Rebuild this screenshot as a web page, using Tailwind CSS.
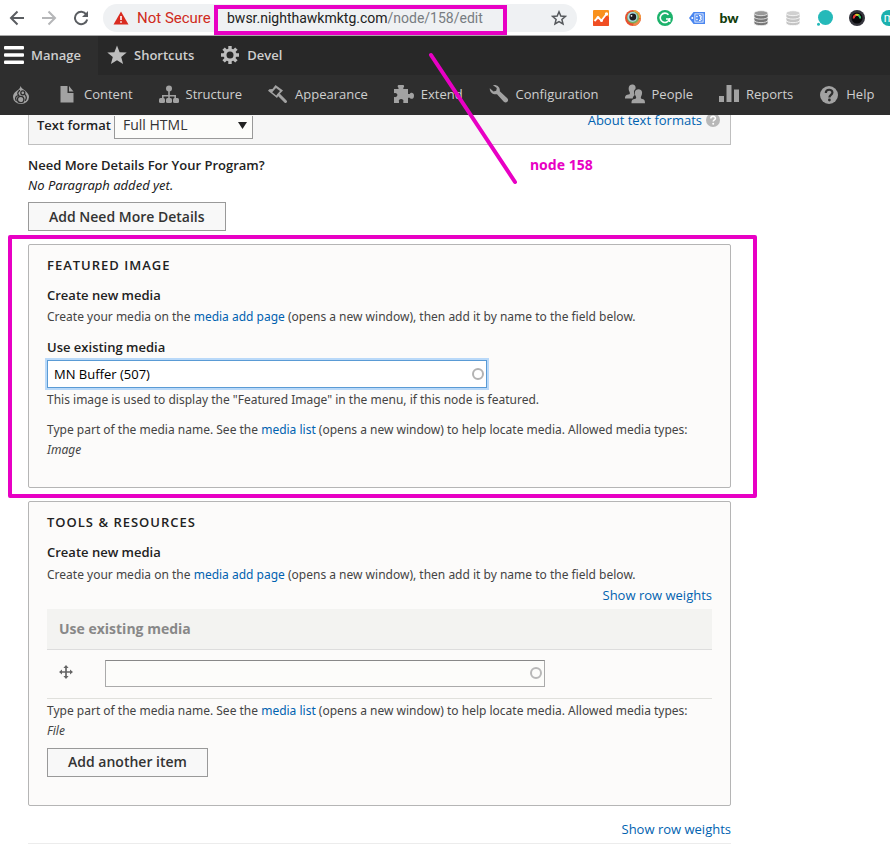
<!DOCTYPE html>
<html lang="en">

<head>
    <meta charset="UTF-8">
    <meta name="viewport" content="width=device-width, initial-scale=1.0">
    <title>Edit node</title>
    <script src="https://cdn.jsdelivr.net/npm/@tailwindcss/browser@4"></script>
</head>

<body class="relative overflow-x-hidden bg-white font-['Open_Sans',sans-serif] text-[13px] leading-5 text-[#222]">

    <!-- Browser bar -->
    <header class="relative flex h-9 items-center border-b border-[#a8a8a8] bg-white font-['Roboto',sans-serif]">
        <button aria-label="Back" class="ml-2 flex w-[18px] justify-center text-[#5a5d61]">
            <svg class="size-4" viewBox="0 0 16 16" fill="none" stroke="currentColor" stroke-width="2"><path d="M15 8H2.5M8.5 1.5L2 8l6.500 6.500"/></svg>
        </button>
        <button aria-label="Forward" class="ml-[14px] flex w-[18px] justify-center text-[#b5b6b8]">
            <svg class="size-4" viewBox="0 0 16 16" fill="none" stroke="currentColor" stroke-width="2"><path d="M1 8h12.500M7.500 1.500L14 8l-6.500 6.500"/></svg>
        </button>
        <button aria-label="Reload" class="ml-[14px] flex w-[18px] justify-center text-[#5a5d61]">
            <svg class="size-4" viewBox="0 0 16 16" fill="none" stroke="currentColor" stroke-width="2"><path d="M13.300 4.500A6.200 6.200 0 1 0 14.200 9.500"/><path d="M15 1v6H9z" fill="currentColor" stroke="none"/></svg>
        </button>
        <div class="ml-[13px] flex h-7 min-w-0 flex-1 items-center rounded-full bg-[#eff1f3] pr-[10px] pl-[10px] text-[14px]">
            <svg class="mr-2 h-4 w-4 shrink-0" viewBox="0 0 16 16"><path d="M8 1.500L15.500 14.500H.5z" fill="#d92b20"/><path d="M7.200 6h1.600v4H7.200zM7.200 11.200h1.600v1.600H7.200z" fill="#fff"/></svg>
            <span class="w-[90px] shrink-0 text-[15px] whitespace-nowrap text-[#d02a20]">Not Secure</span>
            <span class="whitespace-nowrap text-[#222]">bwsr.nighthawkmktg.com<span class="text-[#777c81]">/node/158/edit</span></span>
            <button aria-label="Bookmark" class="ml-auto text-[#55585c]">
                <svg class="size-4" viewBox="0 0 16 16" fill="none" stroke="currentColor" stroke-width="1.500"><path d="M8 1.800l1.800 4.200 4.600.4-3.500 3 1.100 4.500L8 11.500l-4 2.400 1.100-4.500-3.500-3 4.600-.4z"/></svg>
            </button>
        </div>
        <!-- Extensions -->
        <div class="-mr-[7px] ml-4 flex shrink-0 items-center gap-4">
            <svg class="size-4" viewBox="0 0 16 16"><rect width="16" height="16" rx="1" fill="#f9921e"/><path d="M0 11l4-3 4 3 5-6 3 2v8a1 1 0 0 1-1 1H1a1 1 0 0 1-1-1z" fill="#f04e23"/><path d="M1.500 11L5 7.500l3.500 3L13.500 4" fill="none" stroke="#fff" stroke-width="1.800"/><circle cx="5" cy="7.500" r="1.500" fill="#fff"/><circle cx="8.500" cy="10.500" r="1.500" fill="#fff"/><circle cx="13.500" cy="4" r="1.700" fill="#fff"/></svg>
            <svg class="size-4" viewBox="0 0 16 16"><circle cx="8" cy="8" r="8" fill="#e8502f"/><path d="M8 0a8 8 0 0 1 8 8h-4z" fill="#f3a13b"/><path d="M16 8a8 8 0 0 1-8 8l1-4z" fill="#f08a4b"/><circle cx="8" cy="7.500" r="6" fill="#79ad5b"/><circle cx="7.500" cy="7" r="5" fill="#a9d6e0"/><circle cx="7.800" cy="7" r="3.400" fill="#1b1b20"/><circle cx="6.500" cy="5.800" r=".9" fill="#fff"/></svg>
            <svg class="size-4" viewBox="0 0 16 16"><circle cx="8" cy="8" r="8" fill="#1cb26b"/><path d="M11.500 4.700A4.700 4.700 0 1 0 12.500 9H9" fill="none" stroke="#fff" stroke-width="1.600"/><path d="M12.700 8v4" stroke="#fff" stroke-width="1.400"/></svg>
            <svg class="size-4" viewBox="0 0 16 16"><path d="M4.500 2H16v12H4.500L0 8z" fill="#4a86f0"/><path d="M5.500 3.500h9v9h-9z" fill="#fff"/><path d="M6.300 4.300h7.400v7.400H6.300z" fill="#4a86f0"/><circle cx="3.300" cy="8" r="1" fill="#fff"/><path d="M7.200 5.800h1.500v1.500H7.200zM7.200 8.700h1.500v1.500H7.200z" fill="#fff"/><path d="M10 5.600c2.800-.4 2.800 2.100 1 2.400 1.800.3 1.800 2.800-1 2.400" fill="none" stroke="#fff" stroke-width="1.200"/></svg>
            <span class="flex size-4 items-center justify-center font-['Lato',sans-serif] text-[14px] leading-4 font-black text-[#123d0b]">bw</span>
            <svg class="size-4" viewBox="0 0 16 16"><g fill="#777" stroke="#f4f4f4" stroke-width=".8"><path d="M1 11v2c0 3.500 14 3.500 14 0v-2z"/><path d="M1 7.500v2.500c0 3.500 14 3.500 14 0V7.500z"/><path d="M1 3.500v3c0 3.500 14 3.500 14 0v-3z"/><ellipse cx="8" cy="3.200" rx="7" ry="2.500" fill="#999"/></g></svg>
            <svg class="size-4" viewBox="0 0 16 16"><g fill="#c4c4c4" stroke="#fff" stroke-width=".8"><path d="M1 11v2c0 3.500 14 3.500 14 0v-2z"/><path d="M1 7.500v2.500c0 3.500 14 3.500 14 0V7.500z"/><path d="M1 3.500v3c0 3.500 14 3.500 14 0v-3z"/><ellipse cx="8" cy="3.200" rx="7" ry="2.500" fill="#d0d0d0"/></g></svg>
            <svg class="size-4" viewBox="0 0 16 16"><circle cx="8.500" cy="7.500" r="7.500" fill="#25b9b9"/><circle cx="1.500" cy="14.300" r="1.500" fill="#25b9b9"/></svg>
            <svg class="size-4" viewBox="0 0 16 16"><circle cx="8" cy="8" r="8" fill="#34343c"/><circle cx="8" cy="8" r="5.500" fill="#08080a"/><g fill="none" stroke-width="2"><path d="M4.800 8.500A3.200 3.200 0 0 1 7 5" stroke="#e33"/><path d="M6.500 5A3.200 3.200 0 0 1 10 5.600" stroke="#d8d12c"/><path d="M9.500 5.300A3.200 3.200 0 0 1 11.200 8.500" stroke="#2fc56a"/></g></svg>
            <span class="flex size-4 items-center justify-center rounded-full bg-[#1bb0ae] text-[12px] leading-4 text-white">m</span>
        </div>
        <div class="absolute top-[5px] left-[214px] h-[30px] w-[293px] border-4 border-[#e800c4]"></div>
    </header>

    <!-- Admin toolbar -->
    <nav class="relative bg-[#282828] text-[#cfcfcf]">
        <div class="flex h-[39px] font-semibold">
            <a href="#" class="flex w-[98px] items-center gap-[7px] bg-[#2e2e2e] pb-px pl-1">
                <svg class="size-5 text-white" viewBox="0 0 20 20" fill="currentColor"><rect y="1" width="20" height="3.500" rx="1"/><rect y="8.200" width="20" height="3.500" rx="1"/><rect y="15.500" width="20" height="3.500" rx="1"/></svg>
                Manage
            </a>
            <a href="#" class="flex items-center gap-[7px] pr-[13px] pb-px pl-[9px]">
                <svg class="size-5 text-[#bdbdbd]" viewBox="0 0 20 20" fill="currentColor"><path d="M10 .5l2.600 6.700 7.100.4-5.500 4.500 1.900 7L10 15.200l-6.100 3.900 1.900-7L.3 7.600l7.100-.4z"/></svg>
                Shortcuts
            </a>
            <a href="#" class="flex items-center gap-[7px] px-[13px] pb-px">
                <svg class="size-5 text-[#bdbdbd]" viewBox="0 0 20 20"><g stroke="currentColor" stroke-width="3.400"><path d="M10 1v4M10 15v4M1 10h4M15 10h4M3.600 3.600l2.900 2.900M13.500 13.500l2.900 2.900M3.600 16.400l2.900-2.900M13.500 6.500l2.900-2.900"/></g><circle cx="10" cy="10" r="5" fill="none" stroke="currentColor" stroke-width="3"/></svg>
                Devel
            </a>
        </div>
        <div class="flex h-10 bg-[#2e2e2e] font-medium whitespace-nowrap">
            <a href="#" aria-label="Tools" class="flex w-11 items-center pl-3">
                <svg class="h-[18px] w-[18px] text-[#a2a2a2]" viewBox="0 0 18 18"><path d="M8.500 0c.8 2.400 3 3.200 5 5 2.200 2 3.500 3.700 3.500 6a8 7 0 0 1-16 0c0-2.500 1.200-4.300 3.500-6C6.500 3.600 8 2.800 8.500 0z" fill="currentColor"/><g fill="none" stroke="#2e2e2e" stroke-width="1.300" stroke-linecap="round"><circle cx="8.700" cy="13.500" r="3.200"/><circle cx="10.800" cy="6.800" r="2"/><path d="M7.500 4.500C5.500 6.500 5 8 7 9.500M6.800 9.600C4 9.500 2.800 12 4.200 14.500M12.800 8.600c1.800 1.400 2 4 .6 5.700"/></g></svg>
            </a>
            <a href="#" class="flex items-center gap-[7px] px-[13px] pb-[2px]">
                <svg class="size-5 text-[#a2a2a2]" viewBox="0 0 20 20" fill="currentColor"><path d="M3.500 2h7v7H16.500v9.500H3.500z"/><path d="M12 2l4.500 5.500H12z"/></svg>
                Content
            </a>
            <a href="#" class="flex items-center gap-[7px] px-[13px] pb-[2px]">
                <svg class="size-5 text-[#a2a2a2]" viewBox="0 0 20 20" fill="currentColor"><circle cx="10" cy="4.500" r="3"/><path d="M9.200 7h1.600v8H9.200z"/><path d="M3.800 15v-3.200h12.400V15" fill="none" stroke="currentColor" stroke-width="1.600"/><rect y="14" width="6" height="5" rx="1.500"/><rect x="7" y="14" width="6" height="5" rx="1.500"/><rect x="14" y="14" width="6" height="5" rx="1.500"/></svg>
                Structure
            </a>
            <a href="#" class="flex items-center gap-[7px] px-[13px] pb-[2px]">
                <svg class="size-5 text-[#a2a2a2]" viewBox="0 0 20 20"><path d="M7.500 1L15 6.500 11.500 10 9 14 0 6.800l1.300-1.500L4.500 5z" fill="currentColor"/><path d="M8 4l4 3-3.800 4.500-4-3.200z" fill="#2e2e2e"/><path d="M10.800 10.800l6.700 6.700" stroke="currentColor" stroke-width="3" stroke-linecap="round"/></svg>
                Appearance
            </a>
            <a href="#" class="flex items-center gap-[7px] px-[13px] pb-[2px]">
                <svg class="size-5 text-[#a2a2a2]" viewBox="0 0 20 20" fill="currentColor"><path d="M0 5h4.500V3.800C3.500 3.500 3.300 1 4.500 1h4.800c1.200 0 1 2.500 0 2.800V5H14v5h1.800c.4-1.500 4.200-2 4.200 1.700 0 4-3.800 3.600-4.200 2H14V19H9.300v-1.500c1.400-3.500-5.800-3.500-4.300 0V19H0v-6c4.500 1.200 4.500-5 0-3.700z"/></svg>
                Extend
            </a>
            <a href="#" class="flex items-center gap-[7px] px-[13px] pb-[2px]">
                <svg class="size-5 text-[#a2a2a2]" viewBox="0 0 20 20" fill="currentColor"><path d="M4 1.200c3.500-1 7.500 1.800 6.800 6l7.500 7c2.400 2.400-1 6-3.500 3.600l-6.800-7.600C4 11 .5 8 .8 4.200L4.500 7.500l2.700-.8.600-2.800z"/></svg>
                Configuration
            </a>
            <a href="#" class="flex items-center gap-[7px] px-[13px] pb-[2px]">
                <svg class="size-5 text-[#a2a2a2]" viewBox="0 0 20 20" fill="currentColor"><path d="M7.200.5c3 0 3.800 2.200 3.300 4.500-1.800 1-2 3.500-.8 6-1 1-1.700 1.500-2 3.500H0c0-3 1-3.500 4.500-4.200.6-.6.4-1.200 0-2.500C3 5 3.500.5 7.200.5z"/><path d="M13.500 5.300c4 0 4.400 4 2.600 7.300-.4 1.200-.3 1.800.3 2.200 2.800.6 3.600 1.400 3.600 4.400H6.500c0-3 .8-3.800 4-4.400.8-.4.9-1.200.4-2.200C9 9.300 9.500 5.300 13.500 5.300z"/></svg>
                People
            </a>
            <a href="#" class="flex items-center gap-[7px] px-[13px] pb-[2px]">
                <svg class="size-5 text-[#a2a2a2]" viewBox="0 0 20 20" fill="currentColor"><path d="M0 12h5v6H0zM7.500 1h5v17h-5zM15 5.500h5V18h-5z"/></svg>
                Reports
            </a>
            <a href="#" class="flex items-center gap-[7px] pb-[2px] pl-[13px]">
                <svg class="size-5 text-[#a2a2a2]" viewBox="0 0 20 20"><circle cx="10" cy="11" r="9" fill="currentColor"/><path d="M6.800 9c0-4.200 6.600-4.200 6.600-.6 0 2.400-3 2.400-3 5" fill="none" stroke="#2e2e2e" stroke-width="2.200"/><circle cx="10.400" cy="16" r="1.400" fill="#2e2e2e"/></svg>
                Help
            </a>
        </div>
    </nav>

    <main class="mr-[159px] ml-7">
        <!-- Text format, scrolled under the toolbar -->
        <div class="flex h-[30px] items-start border border-t-0 border-[#bfbfbf] bg-[#f6f6f6] pr-[10px] pl-2">
            <label for="format" class="w-[77px] font-semibold">Text format</label>
            <div class="relative">
                <select id="format" class="h-[23px] w-[139px] appearance-none border border-t-0 border-[#999] bg-[#fcfcfa] pb-[5px] pl-2 text-[14px] leading-[18px] text-[#333]">
                    <option>Full HTML</option>
                </select>
                <svg class="pointer-events-none absolute top-[7px] right-[6px] h-[7px] w-[9px]" viewBox="0 0 9 7"><path d="M0 0h9L4.500 7z" fill="#222"/></svg>
            </div>
            <a href="#" class="-mt-[5px] ml-auto text-[#0062b0]">About text formats</a>
            <svg class="-mt-[2px] ml-1 size-[14px]" viewBox="0 0 14 14"><circle cx="7" cy="7" r="7" fill="#b8b8b8"/><path d="M4.800 5.500c0-2.800 4.600-2.800 4.600-.3 0 1.600-2.200 1.600-2.200 3.400" fill="none" stroke="#fff" stroke-width="1.600"/><circle cx="7.200" cy="10.700" r="1" fill="#fff"/></svg>
        </div>

        <div class="pt-[10px]">
            <strong class="block font-semibold">Need More Details For Your Program?</strong>
            <em class="block font-['Noto_Sans',sans-serif]">No Paragraph added yet.</em>
            <button class="mt-[7px] h-[29px] border border-[#999] bg-[#f8f8f8] px-5 text-[14px] font-semibold text-[#333]">Add Need More Details</button>
        </div>

        <!-- Featured image -->
        <section class="relative mt-[13px] rounded-xs border border-[#b5b5b5] bg-[#fcfbfa] px-[18px] pt-[10px] pb-[27px]">
            <h2 class="font-semibold tracking-[1px] uppercase">Featured image</h2>
            <h3 class="mt-[10px] font-semibold">Create new media</h3>
            <p class="mt-[2px] font-['Noto_Sans',sans-serif] text-[12px] text-[#444]">Create your media on the <a href="#" class="text-[#0062b0]">media add page</a> (opens a new window), then add it by name to the field below.</p>
            <label for="featured" class="mt-[10px] block font-semibold">Use existing media</label>
            <div class="relative mt-[3px] w-[440px] max-w-full">
                <input id="featured" type="text" value="MN Buffer (507)" class="block h-7 w-full border border-[#5a9bd5] bg-white px-[6px] text-[13px] text-black ring-2 ring-[#b9d9f9] outline-none">
                <span class="absolute top-2 right-[3px] size-3 rounded-full border-2 border-[#b3b3b3]"></span>
            </div>
            <p class="mt-[2px] font-['Noto_Sans',sans-serif] text-[12px] text-[#444]">This image is used to display the "Featured Image" in the menu, if this node is featured.</p>
            <p class="mt-[10px] font-['Noto_Sans',sans-serif] text-[12px] text-[#444]">Type part of the media name. See the <a href="#" class="text-[#0062b0]">media list</a> (opens a new window) to help locate media. Allowed media types: <em class="block">Image</em></p>
            <div class="pointer-events-none absolute -top-[10px] -right-[27px] -bottom-[11px] -left-[21px] rounded-xs border-4 border-[#e800c4]"></div>
        </section>

        <!-- Tools & resources -->
        <section class="mt-[13px] rounded-xs border border-[#b5b5b5] bg-[#fcfbfa] px-[18px] pt-[10px] pb-7">
            <h2 class="font-semibold tracking-[1px] uppercase">Tools &amp; Resources</h2>
            <h3 class="mt-[10px] font-semibold">Create new media</h3>
            <p class="mt-[3px] font-['Noto_Sans',sans-serif] text-[12px] text-[#444]">Create your media on the <a href="#" class="text-[#0062b0]">media add page</a> (opens a new window), then add it by name to the field below.</p>
            <button class="ml-auto block text-[#0062b0]">Show row weights</button>
            <table class="mt-1 w-full border-collapse">
                <thead>
                    <tr class="h-10 border-b border-[#ddd] bg-[#f3f3f1]">
                        <th colspan="2" class="pl-3 text-left text-[14px] font-bold text-[#888]" id="files">Use existing media</th>
                    </tr>
                </thead>
                <tbody>
                    <tr class="h-[49px] border-b border-[#e0e0dc]">
                        <td class="w-[58px] pl-3">
                            <svg class="-mt-1 size-[14px]" viewBox="0 0 14 14"><path d="M7 1v12M1 7h12" stroke="#666" stroke-width="1.700"/><path d="M7 0l2.600 3H4.400zM7 14l2.600-3H4.400zM0 7l3-2.600v5.200zM14 7l-3-2.600v5.200z" fill="#666"/></svg>
                        </td>
                        <td>
                            <div class="relative w-[440px] max-w-full">
                                <input type="text" aria-labelledby="files" class="block h-[27px] w-full border border-[#aaa] border-t-[#888] bg-[#fcfcfa] px-[6px]">
                                <span class="absolute top-[7px] right-[3px] size-3 rounded-full border-2 border-[#b8b8b8]"></span>
                            </div>
                        </td>
                    </tr>
                </tbody>
            </table>
            <p class="mt-[2px] font-['Noto_Sans',sans-serif] text-[12px] text-[#444]">Type part of the media name. See the <a href="#" class="text-[#0062b0]">media list</a> (opens a new window) to help locate media. Allowed media types: <em class="block">File</em></p>
            <button class="mt-[7px] h-[29px] border border-[#999] bg-[#f8f8f8] px-5 text-[14px] font-semibold text-[#333]">Add another item</button>
        </section>

        <div class="mt-[13px] border-b border-[#ececec] pb-1">
            <button class="ml-auto block text-[#0062b0]">Show row weights</button>
        </div>
    </main>

    <!-- Annotation -->
    <svg class="pointer-events-none absolute top-[52px] left-[428px] h-[134px] w-[92px]" viewBox="0 0 92 134"><path d="M3 3L87 130" stroke="#e800c4" stroke-width="4" stroke-linecap="round"/></svg>
    <span class="absolute top-[155px] left-[530px] font-['Noto_Sans',sans-serif] text-[14px] font-bold text-[#e800c4]">node 158</span>
</body>

</html>
